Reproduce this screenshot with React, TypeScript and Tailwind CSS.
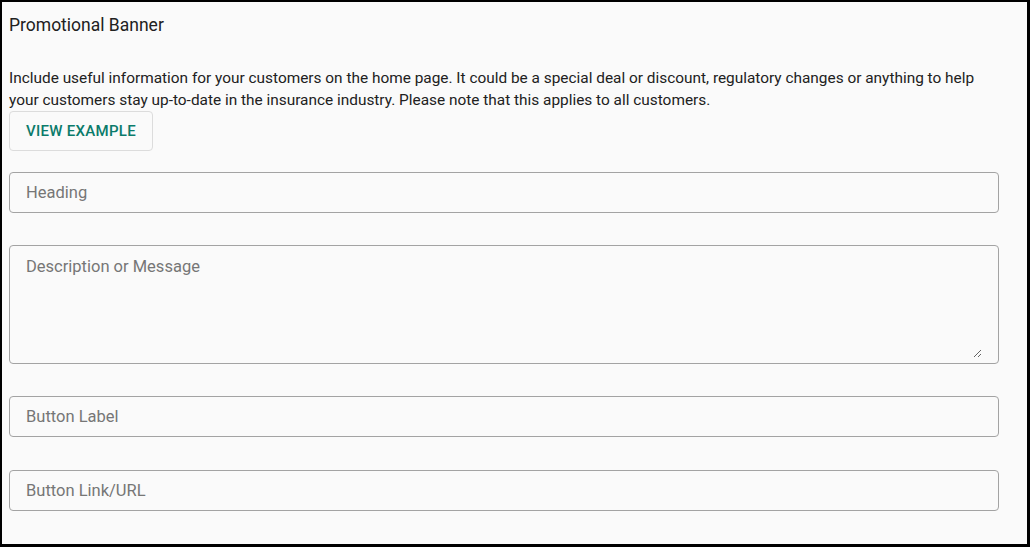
export default function App() {
  const field =
    'block w-full h-[41px] rounded-[4px] border border-[#a3a3a3] bg-transparent px-4 text-[16.5px] text-[#333] placeholder:text-[#767676] outline-none';

  return (
    <div
      className="h-[547px] w-[1030px] overflow-hidden border-t-2 border-l-2 border-r-[3px] border-b-[3px] border-black bg-[#fafafa] pl-[7px] pr-[28px] pt-[11px]"
      style={{ fontFamily: 'Roboto, "Noto Sans", sans-serif' }}
    >
      <h3 className="text-[17.5px] leading-6 text-[#212121]">Promotional Banner</h3>
      <p className="mt-[30px] pr-px text-[15.4px] leading-[22px] text-[#212121]">
        Include useful information for your customers on the home page. It could be a special deal or discount,
        regulatory changes or anything to help your customers stay up-to-date in the insurance industry. Please note
        that this applies to all customers.
      </p>
      <button className="h-[40px] w-[144px] rounded-[4px] border border-[#dcdcdc] text-[15px] font-medium tracking-[0.02em] text-[#0b7b6b]">
        VIEW EXAMPLE
      </button>
      <div className="mt-[21px] flex flex-col gap-[32px]">
        <input className={field} placeholder="Heading" />
        <div className="h-[119px] w-full rounded-[4px] border border-[#a3a3a3] pl-4 pr-4 pt-[9px] pb-[5px]">
          <textarea
            className="block h-full w-full bg-transparent text-[16.5px] text-[#333] placeholder:text-[#767676] outline-none"
            placeholder="Description or Message"
          />
        </div>
        <input className={field} placeholder="Button Label" />
        <input className={`${field} mt-px`} placeholder="Button Link/URL" />
      </div>
    </div>
  );
}
